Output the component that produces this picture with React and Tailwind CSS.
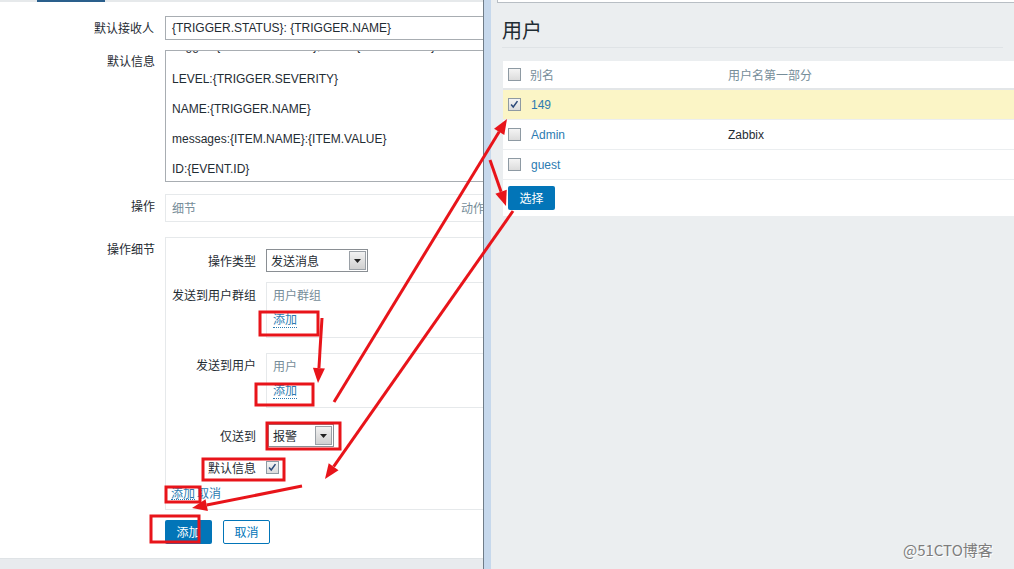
import React from "react";

const cn = "font-['Noto_Sans_CJK_SC',sans-serif]";

function Checkbox({ checked }) {
  return (
    <span className="relative inline-block h-[13px] w-[13px] border border-[#8e9aa3] bg-gradient-to-b from-[#f4f4f4] to-[#dcdcdc]">
      {checked && (
        <svg viewBox="0 0 13 13" className="absolute left-0 top-0 h-[11px] w-[11px]">
          <path d="M2.5 6.5 L5 9.5 L10 2.5" stroke="#2c4a7a" strokeWidth="1.8" fill="none" />
        </svg>
      )}
    </span>
  );
}

function Select({ value, width }) {
  return (
    <div className={`flex h-[23px] ${width} items-center border border-[#8a8f94] bg-white`}>
      <span className="flex-1 pl-[4px] text-[12px] text-[#1f2c33]">{value}</span>
      <span className="mr-[1px] flex h-[19px] w-[17px] items-center justify-center border border-[#9aa0a6] bg-gradient-to-b from-[#f2f2f2] to-[#d0d0d0]">
        <svg width="7" height="4" viewBox="0 0 7 4">
          <path d="M0 0 H7 L3.5 4 Z" fill="#222" />
        </svg>
      </span>
    </div>
  );
}

function Link({ children }) {
  return <span className="border-b border-dotted border-[#2c7bb1] leading-[13px] text-[#2c7bb1]">{children}</span>;
}

function Arrow({ x1, y1, x2, y2 }) {
  const a = Math.atan2(y2 - y1, x2 - x1);
  const l = 15;
  const w = 6;
  const bx = x2 - l * Math.cos(a);
  const by = y2 - l * Math.sin(a);
  const px = -Math.sin(a) * w;
  const py = Math.cos(a) * w;
  return (
    <g>
      <line x1={x1} y1={y1} x2={bx} y2={by} stroke="#e8141a" strokeWidth="3" />
      <polygon points={`${x2},${y2} ${bx + px},${by + py} ${bx - px},${by - py}`} fill="#e8141a" />
    </g>
  );
}

function Annotations() {
  const rects = [
    [260, 312, 58, 23],
    [256, 384, 57, 21],
    [267, 423, 73, 26],
    [203, 459, 81, 21],
    [166, 487, 34, 15],
    [151, 516, 48, 26],
  ];
  return (
    <svg className="pointer-events-none absolute left-0 top-0" width="1014" height="569">
      {rects.map(([x, y, w, h], i) => (
        <rect key={i} x={x} y={y} width={w} height={h} fill="none" stroke="#e8141a" strokeWidth="3" />
      ))}
      <Arrow x1={322} y1={318} x2={318} y2={383} />
      <Arrow x1={334} y1={402} x2={507} y2={119} />
      <Arrow x1={490} y1={160} x2={506} y2={206} />
      <Arrow x1={513} y1={211} x2={325} y2={479} />
      <Arrow x1={302} y1={486} x2={192} y2={508} />
    </svg>
  );
}

function LeftPanel() {
  return (
    <div className={`flex w-[483px] shrink-0 flex-col overflow-hidden bg-white text-[12px] text-[#1f2c33] ${cn}`}>
      <div className="h-[2px] bg-[#e6e9eb]">
        <div className="ml-[37px] h-[2px] w-[68px] bg-[#2a5f8c]" />
      </div>

      <div className="mt-[14px] flex h-[24px] items-center">
        <div className="w-[155px] shrink-0 pr-[1px] text-right">默认接收人</div>
        <div className="ml-[10px] flex h-[24px] w-[340px] shrink-0 items-center border border-[#a8adb2] pl-[6px] font-['Liberation_Sans',sans-serif]">
          {"{TRIGGER.STATUS}: {TRIGGER.NAME}"}
        </div>
      </div>

      <div className="mt-[10px] flex">
        <div className="w-[155px] shrink-0 pt-[2px] text-right">默认信息</div>
        <div className="ml-[10px] h-[132px] w-[340px] shrink-0 overflow-hidden border border-[#a8adb2] pl-[6px] font-['Liberation_Sans',sans-serif] leading-[30px]">
          <div className="-mt-[17px]">
            <div className="h-[30px] leading-[24px]">{"Trigger: {TRIGGER.NAME}, Time: {EVENT.TIME}"}</div>
            <div>{"LEVEL:{TRIGGER.SEVERITY}"}</div>
            <div>{"NAME:{TRIGGER.NAME}"}</div>
            <div>{"messages:{ITEM.NAME}:{ITEM.VALUE}"}</div>
            <div>{"ID:{EVENT.ID}"}</div>
          </div>
        </div>
      </div>

      <div className="mt-[12px] flex">
        <div className="w-[155px] shrink-0 pt-[3px] text-right">操作</div>
        <div className="ml-[10px] flex h-[28px] w-[340px] shrink-0 items-center border border-[#e6e9eb] pl-[6px] text-[#768d99]">
          <span>细节</span>
          <span className="ml-[265px]">动作</span>
        </div>
      </div>

      <div className="mt-[15px] flex">
        <div className="w-[155px] shrink-0 pt-[3px] text-right">操作细节</div>
        <div className="ml-[10px] w-[340px] shrink-0 border border-[#e6e9eb] pb-[8px] pt-[11px]">
          <div className="flex items-center">
            <div className="w-[90px] shrink-0 text-right">操作类型</div>
            <div className="ml-[10px]">
              <Select value="发送消息" width="w-[102px]" />
            </div>
          </div>

          <div className="mt-[10px] flex">
            <div className="w-[90px] shrink-0 pt-[4px] text-right">发送到用户群组</div>
            <div className="ml-[10px] h-[56px] flex-1 border-y border-l border-[#e6e9eb] pl-[6px] pt-[3px]">
              <div className="text-[#768d99]">用户群组</div>
              <div className="mt-[6px]">
                <Link>添加</Link>
              </div>
            </div>
          </div>

          <div className="mt-[15px] flex">
            <div className="w-[90px] shrink-0 pt-[3px] text-right">发送到用户</div>
            <div className="ml-[10px] h-[55px] flex-1 border-y border-l border-[#e6e9eb] pl-[6px] pt-[3px]">
              <div className="text-[#768d99]">用户</div>
              <div className="mt-[6px]">
                <Link>添加</Link>
              </div>
            </div>
          </div>

          <div className="mt-[16px] flex items-center">
            <div className="w-[90px] shrink-0 text-right">仅送到</div>
            <div className="ml-[12px]">
              <Select value="报警" width="w-[66px]" />
            </div>
          </div>

          <div className="mt-[11px] flex h-[19px] items-center">
            <div className="w-[90px] shrink-0 text-right">默认信息</div>
            <div className="ml-[10px] flex">
              <Checkbox checked />
            </div>
          </div>

          <div className="mt-[8px] flex h-[16px] items-center pl-[5px]">
            <Link>添加</Link>
            <span className="ml-[2px] text-[#2c7bb1]">取消</span>
          </div>
        </div>
      </div>

      <div className="ml-[165px] mt-[10px] flex gap-[11px]">
        <button className="h-[24px] w-[47px] rounded-[2px] bg-[#0275b8] text-[12px] text-white">添加</button>
        <button className="h-[24px] w-[47px] rounded-[2px] border border-[#0275b8] bg-white text-[12px] text-[#0275b8]">取消</button>
      </div>

      <div className="flex-1" />
      <div className="h-[11px] border-t border-[#dfe3e6] bg-[#e8ebee]" />
    </div>
  );
}

function RightPanel() {
  const rows = [
    { alias: "149", name: "", checked: true },
    { alias: "Admin", name: "Zabbix" },
    { alias: "guest", name: "" },
  ];
  return (
    <div className={`flex flex-1 flex-col bg-[#ebeef0] text-[12px] ${cn}`}>
      <div className="ml-[6px] h-[3px] border-b border-l border-[#b8bec4] bg-white" />
      <div className="mx-[11px] mt-[15px] h-[30px] border-b border-[#dfe3e6] text-[20px] leading-[24px] text-[#1f2c33]">用户</div>
      <div className="ml-[12px] mt-[13px] bg-white">
        <div className="flex h-[29px] items-center border-b-2 border-[#e3e6e8] text-[#768d99]">
          <div className="ml-[5px] flex">
            <Checkbox />
          </div>
          <div className="ml-[9px] w-[198px]">别名</div>
          <div>用户名第一部分</div>
        </div>
        {rows.map((r) => (
          <div
            key={r.alias}
            className={`flex h-[30px] items-center border-b border-[#ebeef0] font-['Liberation_Sans',sans-serif] ${r.checked ? "bg-[#fbf5c6]" : ""}`}
          >
            <div className="ml-[5px] flex">
              <Checkbox checked={r.checked} />
            </div>
            <div className="ml-[10px] w-[197px] text-[#2c7bb1]">{r.alias}</div>
            <div className="text-[#1f2c33]">{r.name}</div>
          </div>
        ))}
        <div className="flex h-[36px] items-center pl-[5px]">
          <button className="h-[24px] w-[47px] rounded-[2px] bg-[#0275b8] text-[12px] text-white">选择</button>
        </div>
      </div>
      <div className="flex-1" />
    </div>
  );
}

export default function App() {
  return (
    <div className="relative flex h-[569px] w-[1014px] overflow-hidden bg-white">
      <LeftPanel />
      <div className="w-[8px] shrink-0 border-l border-[#6f7c88] bg-[#c6d8ec]" />
      <RightPanel />
      <Annotations />
      <div className={`absolute left-[903px] top-[539px] text-[15px] text-[#7d7d7d] [text-shadow:1px_1px_0_#ffffff] ${cn}`}>@51CTO博客</div>
    </div>
  );
}
